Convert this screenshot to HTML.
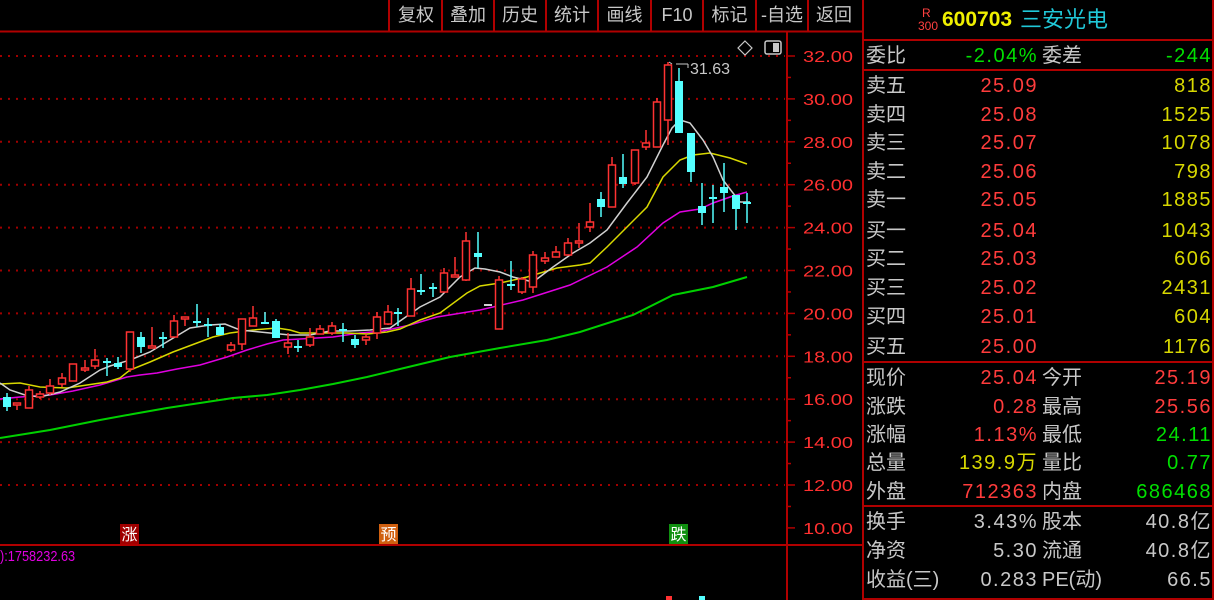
<!DOCTYPE html>
<html><head><meta charset="utf-8"><style>
html,body{margin:0;padding:0;background:#000;width:1214px;height:600px;overflow:hidden;font-family:"Liberation Sans","Noto Sans CJK SC",sans-serif}
#root{position:relative;width:1214px;height:600px}
.tb{position:absolute;top:0;height:31px;color:#c8c8c8;font-size:18px;line-height:31px;text-align:center}
.rp{position:absolute;font-size:20px;line-height:28px;height:28px;white-space:nowrap}
.v{letter-spacing:1.5px;margin-right:-1.5px}
.lab{color:#c8c8c8}
.r{color:#ff3c3c}.g{color:#00e000}.y{color:#d8d800}.w{color:#c8c8c8}
</style></head><body><div id="root">
<svg id="chart" width="1214" height="600" style="position:absolute;left:0;top:0"></svg>
<div class="tb" style="left:390px;width:52px">复权</div>
<div class="tb" style="left:442px;width:52px">叠加</div>
<div class="tb" style="left:494px;width:52px">历史</div>
<div class="tb" style="left:546px;width:52px">统计</div>
<div class="tb" style="left:598px;width:53px">画线</div>
<div class="tb" style="left:651px;width:52px">F10</div>
<div class="tb" style="left:703px;width:53px">标记</div>
<div class="tb" style="left:756px;width:52px">-自选</div>
<div class="tb" style="left:808px;width:52px">返回</div>

<div style="position:absolute;left:922px;top:7px;color:#ff4040;font-size:12px;line-height:12px">R</div>
<div style="position:absolute;left:918px;top:20px;color:#ff4040;font-size:12px;line-height:12px">300</div>
<div style="position:absolute;left:942px;top:6px;color:#f0f000;font-size:21px;font-weight:bold;line-height:28px">600703</div>
<div style="position:absolute;left:1020px;top:6px;color:#20c8d8;font-size:22px;line-height:28px">三安光电</div>
<div id="rows"></div>
<div style="position:absolute;left:0;top:547px;color:#e000e0;font-size:15px;line-height:20px;transform:scaleX(0.85);transform-origin:left">):1758232.63</div>
<div style="position:absolute;left:690px;top:60px;color:#c8c8c8;font-size:16px;line-height:20px">31.63</div>
</div>
<script>
(function(){
var s='';
function L(x1,y1,x2,y2,c,w,extra){s+='<line x1="'+x1+'" y1="'+y1+'" x2="'+x2+'" y2="'+y2+'" stroke="'+c+'" stroke-width="'+(w||1)+'" '+(extra||'')+'/>';}
L(0,31.5,862,31.5,'#b00000',2);
[389,442,494,546,598,651,703,756,808].forEach(function(xs){L(xs,0,xs,31,'#b00000',2);});
L(787,31,787,600,'#b00000',2);
L(0,545,862,545,'#b00000',2);
L(863,0,863,600,'#b00000',2);
L(1213,0,1213,600,'#b00000',2);
L(862,40,1214,40,'#b00000',2);
L(862,70,1214,70,'#b00000',2);
L(862,362,1214,362,'#b00000',2);
L(862,506,1214,506,'#b00000',2);
L(862,599,1214,599,'#b00000',2);
var labs=['32.00','30.00','28.00','26.00','24.00','22.00','20.00','18.00','16.00','14.00','12.00','10.00'];
for(var i=0;i<12;i++){var y=56+i*42.9;
 if(i<11)L(0,y,785,y,'#a00000',2,'stroke-dasharray="2 6"');
 L(787,y,795,y,'#b00000',1.5);
 if(i<11)L(787,y+21.45,791,y+21.45,'#b00000',1.5);
 s+='<text x="853" y="'+(y+6)+'" fill="#ff3030" font-size="16" text-anchor="end" font-family="Liberation Sans" textLength="50" lengthAdjust="spacingAndGlyphs">'+labs[i]+'</text>';}
function P(pts,c,w){s+='<polyline fill="none" stroke="'+c+'" stroke-width="'+(w||1.5)+'" points="'+pts+'"/>';}
P('0,438 50,430 100,420 133,414 167,408 200,403 233,398 267,395 300,390 333,384 367,377 400,369 450,357 500,348 547,340 580,332 633,315 673,295 713,287 747,277','#00d000',2);
P('0,399 20,397 50,395 73,391 100,385 127,377 140,375 157,373 177,369 200,365 227,357 247,350 267,344 283,340 300,339 333,337 360,333 383,331 410,325 437,317 480,310 523,300 570,285 607,267 637,247 663,223 680,212 700,209 713,203 733,196 747,192','#e000e0',1.5);
P('0,384 20,383 40,387 67,388 87,385 107,382 120,378 130,370 150,362 173,352 197,343 213,337 230,333 253,330 277,328 290,330 300,333 320,333 347,333 367,334 387,332 400,329 420,320 440,313 467,293 480,286 500,283 527,277 557,268 580,265 590,263 607,247 627,227 647,207 663,177 680,160 693,155 710,153 730,158 747,164','#d8d800',1.5);
P('0,383 10,390 25,395 40,397 60,392 80,383 100,370 110,366 130,360 150,352 170,340 190,328 210,325 225,324 240,330 260,332 290,335 310,335 330,331 350,331 370,330 390,328 420,307 440,297 460,277 475,268 485,269 500,272 513,277 533,282 553,267 573,253 590,243 607,230 627,203 647,177 663,145 672,128 680,120 690,123 703,140 713,157 723,180 733,193 740,202 750,202','#d0d0d0',1.5);
var C=[[7,'c',397,407,393,411],[17,'r',403,404,403,410],[29,'r',390,408,386,408],[40,'r',394,397,391,399],[50,'r',386,393,379,395],[62,'r',378,384,373,387],[73,'r',364,381,364,381],[85,'r',368,369,360,372],[95,'r',360,366,349,369],[107,'c',361,362,358,376],[118,'c',363,367,357,369],[130,'r',332,369,332,372],[141,'c',337,347,332,353],[152,'r',346,348,327,348],[163,'c',337,338,332,348],[174,'r',321,337,315,337],[185,'r',317,318,317,326],[197,'c',321,323,304,327],[208,'c',324,325,318,337],[220,'c',327,335,324,335],[231,'r',345,350,342,352],[242,'r',319,344,319,350],[253,'r',318,326,306,326],[265,'c',322,323,312,323],[276,'c',321,338,319,338],[288,'r',343,347,333,354],[298,'c',346,347,340,352],[310,'r',337,345,328,347],[320,'r',329,334,325,334],[332,'r',326,333,322,335],[343,'c',329,330,323,342],[355,'c',339,345,335,348],[366,'r',337,340,334,345],[377,'r',317,333,312,339],[388,'r',312,324,305,325],[398,'c',312,313,308,326],[411,'r',289,316,278,316],[421,'c',290,291,274,295],[433,'c',287,288,283,297],[444,'r',273,292,268,292],[455,'r',275,276,257,276],[466,'r',241,280,232,281],[478,'c',253,257,232,268],[488,'w',304,305,304,305],[499,'r',280,329,276,329],[511,'c',284,285,261,290],[522,'r',279,292,277,294],[533,'r',255,287,251,293],[545,'r',258,261,252,264],[556,'r',252,257,246,257],[568,'r',243,255,238,255],[579,'r',241,243,223,248],[590,'r',222,227,203,232],[601,'c',199,207,192,217],[612,'r',165,207,157,207],[623,'c',177,184,154,188],[635,'r',150,183,150,185],[646,'r',143,147,130,150],[657,'r',102,147,98,147],[668,'r',65,120,62,145],[679,'c',81,133,68,133],[691,'c',133,172,133,182],[702,'c',206,213,183,225],[713,'c',197,198,185,223],[724,'c',187,193,163,212],[736,'c',195,209,195,230],[747,'c',202,203,193,223]];
C.forEach(function(k){var x=k[0],t=k[1];
 var col=t=='r'?'#ff3232':(t=='c'?'#54ffff':'#d0d0d0');
 L(x,k[4],x,k[5],col,1.5);
 var hh=Math.max(k[3]-k[2],2);
 if(t=='r')s+='<rect x="'+(x-3.5)+'" y="'+k[2]+'" width="7" height="'+hh+'" fill="#000" stroke="'+col+'" stroke-width="1.5"/>';
 else s+='<rect x="'+(x-4)+'" y="'+k[2]+'" width="8" height="'+hh+'" fill="'+col+'"/>';});
L(669,62,672,64,'#c8c8c8',1);L(676,64,688,64,'#c8c8c8',1);L(688,64,688,68,'#c8c8c8',1);
s+='<polygon points="745,41 752,48 745,55 738,48" fill="none" stroke="#c8c8c8" stroke-width="1.2"/>';
s+='<rect x="765" y="41" width="16" height="13" rx="2" fill="none" stroke="#c8c8c8" stroke-width="1.5"/><rect x="773" y="43" width="6" height="9" fill="#c8c8c8"/>';
function M(x,bg,ch){s+='<rect x="'+x+'" y="524" width="19" height="20" fill="'+bg+'"/><text x="'+(x+9.5)+'" y="540" fill="#fff" font-size="16" text-anchor="middle" font-family="Noto Sans CJK SC">'+ch+'</text>';}
M(120,'#a00000','涨');M(379,'#d06010','预');M(669,'#109010','跌');
s+='<rect x="666" y="596" width="6" height="4" fill="#ff3232"/><rect x="699" y="596" width="6" height="4" fill="#54ffff"/>';
document.getElementById('chart').innerHTML=s;

var R=[
[56,'委比','-2.04%','g','委差','-244','g'],
[86,'卖五','25.09','r','','818','y'],
[115,'卖四','25.08','r','','1525','y'],
[143,'卖三','25.07','r','','1078','y'],
[172,'卖二','25.06','r','','798','y'],
[200,'卖一','25.05','r','','1885','y'],
[231,'买一','25.04','r','','1043','y'],
[259,'买二','25.03','r','','606','y'],
[288,'买三','25.02','r','','2431','y'],
[317,'买四','25.01','r','','604','y'],
[347,'买五','25.00','r','','1176','y'],
[378,'现价','25.04','r','今开','25.19','r'],
[407,'涨跌','0.28','r','最高','25.56','r'],
[435,'涨幅','1.13%','r','最低','24.11','g'],
[463,'总量','139.9万','y','量比','0.77','g'],
[492,'外盘','712363','r','内盘','686468','g'],
[522,'换手','3.43%','w','股本','40.8亿','w'],
[551,'净资','5.30','w','流通','40.8亿','w'],
[580,'收益(三)','0.283','w','PE(动)','66.5','w']];
var h='';
R.forEach(function(r){var ty=r[0]-14;
 h+='<div class="rp lab" style="left:866px;top:'+ty+'px">'+r[1]+'</div>';
 h+='<div class="rp v '+r[3]+'" style="left:900px;width:138px;text-align:right;top:'+ty+'px">'+r[2]+'</div>';
 if(r[4])h+='<div class="rp lab" style="left:1042px;top:'+ty+'px">'+r[4]+'</div>';
 h+='<div class="rp v '+r[6]+'" style="left:1080px;width:132px;text-align:right;top:'+ty+'px">'+r[5]+'</div>';});
document.getElementById('rows').innerHTML=h;
})();
</script>
</body></html>
